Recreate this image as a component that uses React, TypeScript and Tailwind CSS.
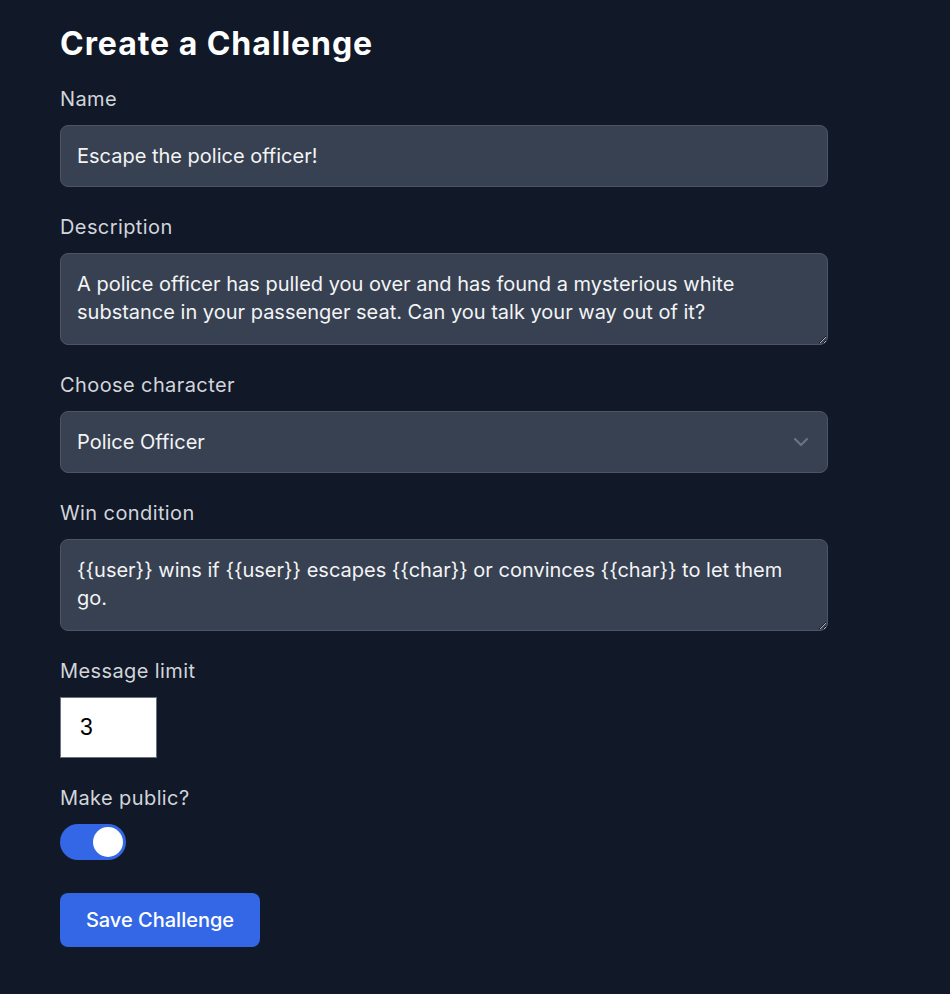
import React, { useState } from 'react';

export default function App() {
  const [name, setName] = useState('Escape the police officer!');
  const [description, setDescription] = useState(
    'A police officer has pulled you over and has found a mysterious white substance in your passenger seat. Can you talk your way out of it?'
  );
  const [character, setCharacter] = useState('police');
  const [winCondition, setWinCondition] = useState(
    '{{user}} wins if {{user}} escapes {{char}} or convinces {{char}} to let them go.'
  );
  const [limit, setLimit] = useState('3');
  const [isPublic, setIsPublic] = useState(true);

  const labelClass = 'block text-xl leading-7 tracking-[0.02em] text-[#d1d5db]';
  const fieldClass =
    'block w-full rounded-lg border border-[#4b5563] bg-[#374151] px-4 py-4 text-xl leading-7 text-[#f3f4f6] outline-none';

  return (
    <div className="min-h-[994px] bg-[#111827] font-['Inter',sans-serif]">
      <div className="w-[828px] pl-[60px] pt-[26px]">
        <h1 className="text-[32px] leading-9 font-bold tracking-[0.03em] text-white">Create a Challenge</h1>

        <form className="mt-[23px] flex flex-col gap-[26px]" onSubmit={(e) => e.preventDefault()}>
          {/* Name */}
          <div>
            <label className={labelClass}>Name</label>
            <input
              className={`${fieldClass} mt-3 h-[62px]`}
              value={name}
              onChange={(e) => setName(e.target.value)}
            />
          </div>

          {/* Description */}
          <div>
            <label className={labelClass}>Description</label>
            <textarea
              className={`${fieldClass} mt-3 h-[92px]`}
              value={description}
              onChange={(e) => setDescription(e.target.value)}
            />
          </div>

          {/* Character */}
          <div>
            <label className={labelClass}>Choose character</label>
            <div className="relative mt-3">
              <select
                className={`${fieldClass} h-[62px] appearance-none`}
                value={character}
                onChange={(e) => setCharacter(e.target.value)}
              >
                <option value="police">Police Officer</option>
              </select>
              <svg
                className="pointer-events-none absolute right-[19px] top-1/2 -translate-y-1/2"
                width="16"
                height="10"
                viewBox="0 0 16 10"
                fill="none"
              >
                <path d="M2 2l6 6 6-6" stroke="#6b7280" strokeWidth="2.2" strokeLinecap="round" strokeLinejoin="round" />
              </svg>
            </div>
          </div>

          {/* Win condition */}
          <div>
            <label className={labelClass}>Win condition</label>
            <textarea
              className={`${fieldClass} mt-3 h-[92px]`}
              value={winCondition}
              onChange={(e) => setWinCondition(e.target.value)}
            />
          </div>

          {/* Message limit */}
          <div>
            <label className={labelClass}>Message limit</label>
            <input
              type="number"
              className="mt-3 block h-[61px] w-[97px] border border-[#6b7280] bg-white pl-[19px] text-[23px] text-black outline-none font-['Liberation_Sans',sans-serif]"
              value={limit}
              onChange={(e) => setLimit(e.target.value)}
            />
          </div>

          {/* Public toggle */}
          <div>
            <label className={labelClass}>Make public?</label>
            <button
              type="button"
              onClick={() => setIsPublic(!isPublic)}
              className={`mt-3 flex h-9 w-[66px] items-center rounded-full px-[3px] ${
                isPublic ? 'justify-end bg-[#3367e6]' : 'justify-start bg-[#4b5563]'
              }`}
            >
              <span className="block h-[30px] w-[30px] rounded-full bg-white" />
            </button>
          </div>

          <div className="pt-[7px]">
            <button
              type="submit"
              className="h-[54px] w-[200px] rounded-lg bg-[#3367e6] text-xl font-medium text-white"
            >
              Save Challenge
            </button>
          </div>
        </form>
      </div>
    </div>
  );
}
